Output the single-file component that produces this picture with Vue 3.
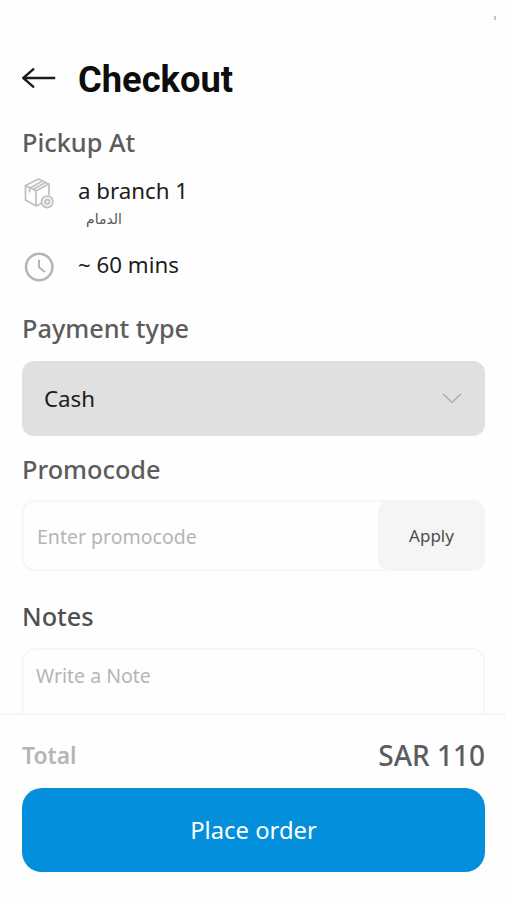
<script setup>
import { ref } from 'vue'

const promocode = ref('')
const note = ref('')
</script>

<template>
  <div class="screen">
    <span class="status-mark" aria-hidden="true"></span>

    <header class="header">
      <button type="button" class="back" aria-label="Back">
        <svg width="34" height="22" viewBox="0 0 34 22" fill="none">
          <path d="M33.2 11H1.2M12 1.6L1.2 11L12 20.4" stroke="#1c1c1c" stroke-width="2.4" />
        </svg>
      </button>
      <h1 class="title">Checkout</h1>
    </header>

    <main class="content">
      <h2 class="heading">Pickup At</h2>
      <div class="row branch">
        <svg class="row-icon" width="34" height="34" viewBox="0 0 34 34" fill="none" stroke="#c0c0c0" stroke-width="1.7" stroke-linejoin="round">
          <path d="M3.5 9.5L16.5 3L27 8L14 14.8Z" />
          <path d="M3.5 9.5V24L14 30L19.5 27.4M14 14.8V30M27 8V19.5" />
          <path d="M7.5 12.2L20.2 5.2M10.8 13.4L23.6 6.6M7.5 12.2V16.5" />
          <circle cx="25.2" cy="25.8" r="5.8" fill="#efefef" />
          <circle cx="25.2" cy="25.8" r="2.2" />
        </svg>
        <div>
          <p class="row-text">a branch 1</p>
          <p class="city" dir="rtl" lang="ar">الدمام</p>
        </div>
      </div>
      <div class="row time">
        <svg class="row-icon" width="34" height="34" viewBox="0 0 34 34" fill="none" stroke="#b5b5b5" stroke-width="2.5">
          <circle cx="17.2" cy="18" r="13.2" />
          <path d="M17 10.8V18.3L23 23" stroke-width="2" />
        </svg>
        <p class="row-text">~ 60 mins</p>
      </div>

      <h2 class="heading payment">Payment type</h2>
      <button type="button" class="select">
        <span>Cash</span>
        <svg width="20" height="12" viewBox="0 0 20 12" fill="none">
          <path d="M1.2 2L10 10.5L18.8 2" stroke="#b0b0b0" stroke-width="1.6" />
        </svg>
      </button>

      <h2 class="heading promo">Promocode</h2>
      <div class="promo-box">
        <input v-model="promocode" class="promo-input" type="text" placeholder="Enter promocode" />
        <button type="button" class="apply">Apply</button>
      </div>

      <h2 class="heading notes">Notes</h2>
      <textarea v-model="note" class="note" placeholder="Write a Note"></textarea>
    </main>

    <footer class="footer">
      <div class="total">
        <span class="total-label">Total</span>
        <span class="total-value">SAR 110</span>
      </div>
      <button type="button" class="place">Place order</button>
    </footer>
  </div>
</template>

<style>
body {
  background: #fefefe;
}
</style>

<style scoped>
.screen {
  position: relative;
  display: flex;
  flex-direction: column;
  box-sizing: border-box;
  height: 900px;
  padding-top: 57px;
  overflow: hidden;
  background: #fefefe;
  font-family: 'Noto Sans', 'Open Sans', sans-serif;
  color: #1c1c1c;
}

button,
input,
textarea {
  margin: 0;
  padding: 0;
  border: none;
  background: none;
  font-family: inherit;
  box-sizing: border-box;
}

button {
  cursor: pointer;
}

p {
  margin: 0;
}

.status-mark {
  position: absolute;
  top: 16px;
  right: 10px;
  width: 2px;
  height: 4px;
  background: #c4c4c4;
}

.header {
  display: flex;
  align-items: center;
  gap: 22px;
  height: 46px;
  padding: 0 22px;
}

.back {
  display: flex;
  width: 34px;
  margin-top: -4px;
}

.title {
  margin: 0;
  font-family: Roboto, sans-serif;
  font-size: 36.3px;
  font-weight: 700;
  line-height: 46px;
  color: #0d0d0d;
}

.content {
  flex: 1;
  min-height: 0;
  padding: 22px 21px 0 22px;
  overflow: hidden;
}

.heading {
  margin: 0;
  font-size: 25.3px;
  font-weight: 500;
  line-height: 34px;
  color: #5c5c5c;
}

.row {
  display: flex;
  gap: 22px;
}

.row-icon {
  flex: none;
}

.row-text {
  font-size: 22.3px;
  line-height: 30px;
}

.branch {
  margin-top: 17px;
}

.city {
  width: 44px;
  font-family: 'DejaVu Sans', sans-serif;
  font-size: 14px;
  line-height: 27px;
  color: #555;
}

.time {
  align-items: center;
  margin-top: 16px;
}

.time .row-text {
  margin-top: -2px;
}

.payment {
  margin-top: 28px;
}

.select {
  display: flex;
  align-items: center;
  justify-content: space-between;
  width: 100%;
  height: 75px;
  margin-top: 16px;
  padding: 0 23px 1px 22px;
  border-radius: 12px;
  background: #e0e0e0;
  font-size: 22.3px;
  color: #1c1c1c;
}

.promo {
  margin-top: 16px;
}

.promo-box {
  display: flex;
  box-sizing: border-box;
  height: 71px;
  margin-top: 14px;
  border: 2px solid #f6f6f6;
  border-radius: 12px;
}

.promo-input {
  flex: 1;
  min-width: 0;
  padding: 1px 0 0 13px;
  font-size: 19.5px;
  outline: none;
}

.promo-input::placeholder,
.note::placeholder {
  color: #b5b5b5;
  opacity: 1;
}

.apply {
  width: 107px;
  margin: -2px;
  border-radius: 12px;
  background: #f5f5f5;
  font-size: 17px;
  color: #4c4c4c;
}

.notes {
  margin-top: 28px;
  color: #505050;
}

.note {
  display: block;
  width: 100%;
  height: 130px;
  margin-top: 15px;
  padding: 12px;
  border: 2px solid #f6f6f6;
  border-radius: 12px;
  font-size: 19.5px;
  line-height: 27px;
  resize: none;
  outline: none;
}

.footer {
  flex: none;
  box-sizing: border-box;
  height: 187px;
  padding: 22px 21px 0 22px;
  border-top: 2px solid #f6f6f6;
  background: #fefefe;
}

.total {
  display: flex;
  align-items: center;
  justify-content: space-between;
  height: 36px;
}

.total-label {
  font-size: 22.8px;
  font-weight: 600;
  color: #b5b5b5;
}

.total-value {
  font-size: 28px;
  font-weight: 500;
  color: #5c5c5c;
}

.place {
  display: block;
  width: 100%;
  height: 84px;
  margin-top: 15px;
  padding-bottom: 1px;
  border-radius: 20px;
  background: #048fdd;
  font-size: 23.8px;
  color: #fff;
}
</style>
